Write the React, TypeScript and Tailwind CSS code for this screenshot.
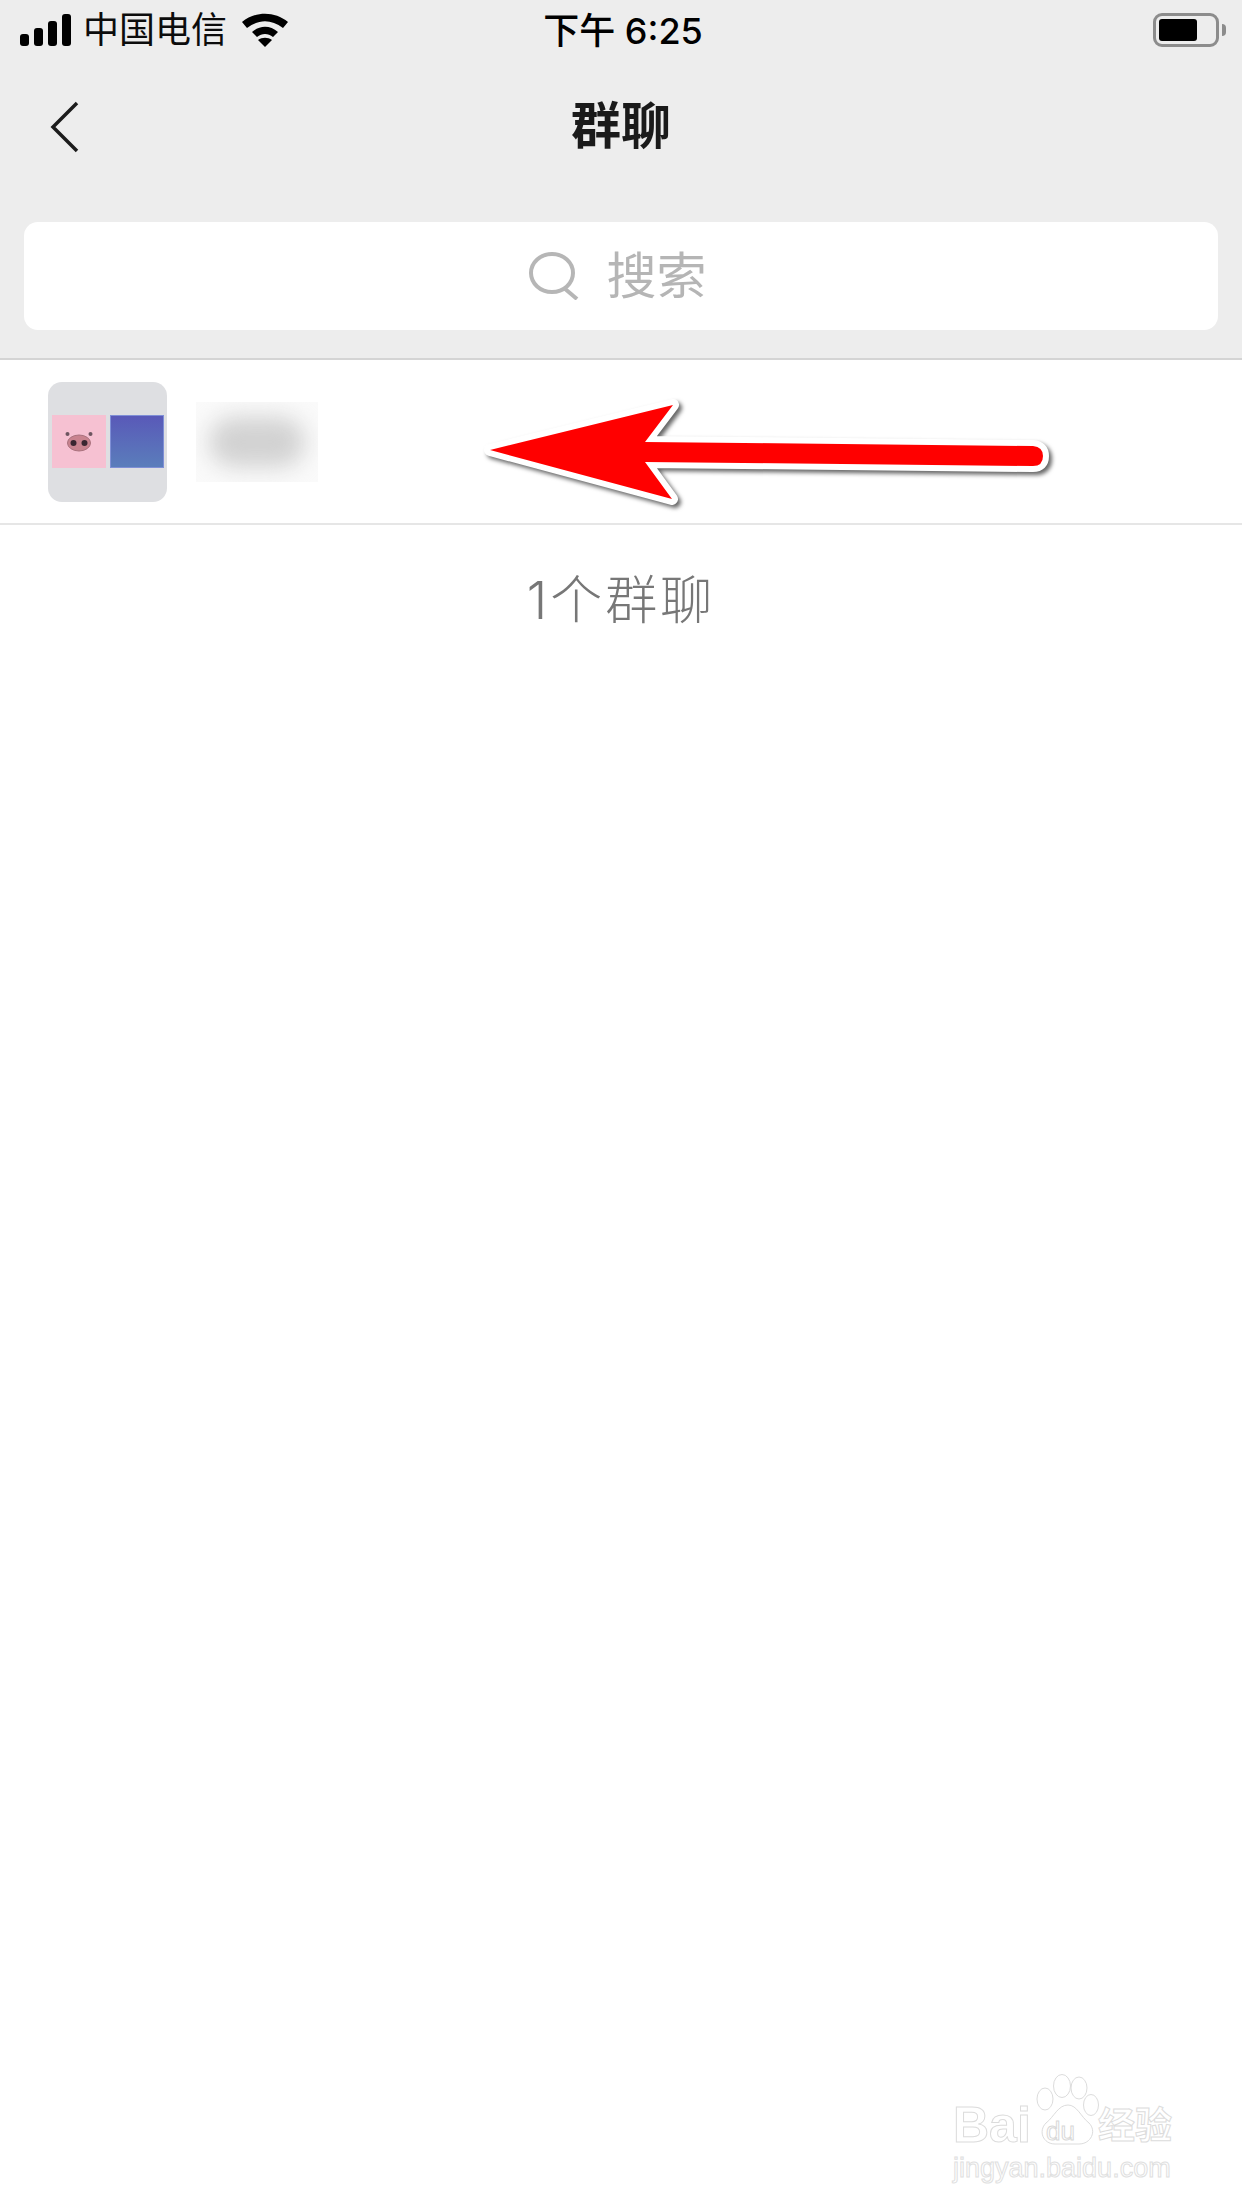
const CJK = 'font-["Liberation_Sans","Noto_Sans_CJK_SC",sans-serif]';

function Signal() {
    return (
        <div className="flex items-end gap-[5px] h-[32px]">
            <div className="w-[9px] h-[12px] rounded-[3px] bg-black" />
            <div className="w-[9px] h-[18px] rounded-[3px] bg-black" />
            <div className="w-[9px] h-[25px] rounded-[3px] bg-black" />
            <div className="w-[9px] h-[32px] rounded-[3px] bg-black" />
        </div>
    );
}

function Wifi() {
    return (
        <svg width="48" height="34" viewBox="0 0 48 34" className="ml-[14px]">
            <path d="M1 9 C14 -2 34 -2 47 9 L42 15 C30 6 18 6 6 15 Z" fill="#000" />
            <path d="M11 19 C19 12 29 12 37 19 L32 24 C27 20 21 20 16 24 Z" fill="#000" />
            <path d="M24 34 L17 27 C21 24 27 24 31 27 Z" fill="#000" />
        </svg>
    );
}

function Battery() {
    return (
        <div className="flex items-center gap-[3px]">
            <div className="w-[66px] h-[34px] rounded-[9px] border-[3px] border-[#8c8c8c] p-[3px]">
                <div className="w-[38px] h-full rounded-[3px] bg-black" />
            </div>
            <div className="w-[4px] h-[12px] rounded-r-[4px] bg-[#8c8c8c]" />
        </div>
    );
}

function Avatar() {
    return (
        <div className="w-[119px] h-[120px] rounded-[14px] bg-[#dedfe2] flex items-center justify-center gap-[4px] pl-[1px]">
            <div className="w-[54px] h-[53px] bg-[#f6c1d2] flex items-center justify-center">
                <svg width="30" height="24" viewBox="0 0 30 24">
                    <circle cx="3.5" cy="4" r="2" fill="#6d5560" />
                    <circle cx="26.5" cy="4" r="2" fill="#6d5560" />
                    <ellipse cx="15" cy="13" rx="11.5" ry="8" fill="#c9838f" stroke="#a9727e" strokeWidth="1" />
                    <circle cx="9.5" cy="13" r="3" fill="#3a2630" />
                    <circle cx="20.5" cy="13" r="3" fill="#3a2630" />
                </svg>
            </div>
            <div className="w-[54px] h-[53px] bg-gradient-to-b from-[#5959b8] to-[#5a7dbb] border border-[#7f8fd6]" />
        </div>
    );
}

function RedArrow() {
    const d = 'M490 450 L673 405 L645 442 L1033 446 Q1043 447 1043 456 Q1043 466 1033 466 L645 462 L672 499 Z';
    return (
        <svg width="1242" height="600" viewBox="0 0 1242 600" className="absolute left-0 top-0 pointer-events-none drop-shadow-[3px_3px_2px_rgba(0,0,0,0.6)]">
            <path d={d} fill="#fff" stroke="#fff" strokeWidth="12" strokeLinejoin="round" />
            <path d={d} fill="#ff0000" />
        </svg>
    );
}

function Watermark() {
    return (
        <div className="absolute left-[953px] top-[2073px] w-[240px] h-[120px] pointer-events-none">
            <svg width="70" height="72" viewBox="0 0 70 72" className="absolute left-[76px] top-0" fill="#fff" stroke="#dcdcdc" strokeWidth="1">
                <ellipse cx="16" cy="26" rx="8" ry="11" />
                <ellipse cx="33" cy="13" rx="8.5" ry="11.5" />
                <ellipse cx="50" cy="15" rx="8" ry="11" />
                <ellipse cx="62" cy="32" rx="7.5" ry="10.5" />
                <path d="M39 32 C48 32 52 44 60 50 C68 58 62 71 50 71 L26 71 C14 71 9 58 17 50 C25 44 29 32 39 32 Z" />
            </svg>
            <div className={`${CJK} absolute left-0 top-[27px] text-[50px] leading-[50px] font-bold text-white [-webkit-text-stroke:1px_#dcdcdc]`}>Bai</div>
            <div className={`${CJK} absolute left-[93px] top-[46px] text-[26px] leading-[24px] text-white [-webkit-text-stroke:1px_#d8d8d8]`}>du</div>
            <div className={`${CJK} absolute left-[145px] top-[34px] text-[37px] leading-[40px] font-bold text-white [-webkit-text-stroke:1px_#dcdcdc]`}>经验</div>
            <div className={`${CJK} absolute left-0 top-[81px] text-[27px] leading-[28px] text-white [-webkit-text-stroke:1px_#e0e0e0]`}>jingyan.baidu.com</div>
        </div>
    );
}

export default function App() {
    return (
        <div className={`${CJK} relative w-[1242px] h-[2208px] bg-white overflow-hidden`}>
            <div className="h-[360px] bg-[#ededed] border-b-2 border-[#d4d4d4] flex flex-col">
                <div className="flex items-center h-[60px] pl-[20px] pr-[16px]">
                    <div className="flex-1 flex items-center">
                        <Signal />
                        <span className="ml-[12px] text-[36px] leading-[44px] mt-[2px] text-[#0c0c0c]">中国电信</span>
                        <Wifi />
                    </div>
                    <span className='font-["Inter","Noto_Sans_CJK_SC",sans-serif] text-[36px] leading-[44px] mt-[2px] text-black font-medium'>下午 6:25</span>
                    <div className="flex-1 flex justify-end">
                        <Battery />
                    </div>
                </div>
                <div className="relative h-[64px] mt-[35px] flex items-center justify-center">
                    <svg width="30" height="52" viewBox="0 0 30 52" className="absolute left-[50px] top-[6px]" fill="none" stroke="#1c1c1c" strokeWidth="3.5">
                        <path d="M27 2 L3 26 L27 50" />
                    </svg>
                    <span className="text-[50px] leading-[64px] font-bold text-[#1a1a1a]">群聊</span>
                </div>
                <div className="mx-[24px] mt-[63px] h-[108px] rounded-[14px] bg-white flex items-center justify-center gap-[28px] pr-[7px]">
                    <svg width="50" height="48" viewBox="0 0 50 48" fill="none" stroke="#b6b6b6" strokeWidth="4">
                        <ellipse cx="23" cy="21" rx="21" ry="19" />
                        <path d="M35 36 L48 47" />
                    </svg>
                    <span className="text-[50px] leading-[60px] mt-[2px] text-[#b5b5b5]">搜索</span>
                </div>
            </div>

            <div className="h-[165px] border-b-2 border-[#e6e6e6] flex items-center pl-[48px]">
                <Avatar />
                <div className="ml-[29px] w-[122px] h-[80px] bg-[#fafafa] overflow-hidden flex items-center justify-center">
                    <div className="w-[96px] h-[50px] rounded-full bg-[#d2d2d2] blur-[11px]" />
                </div>
            </div>

            <div className='font-["Inter","Noto_Sans_CJK_SC",sans-serif] font-light text-center mt-[46px] text-[52px] leading-[60px] tracking-[3px] text-[#777777]'>1个群聊</div>

            <RedArrow />
            <Watermark />
        </div>
    );
}
